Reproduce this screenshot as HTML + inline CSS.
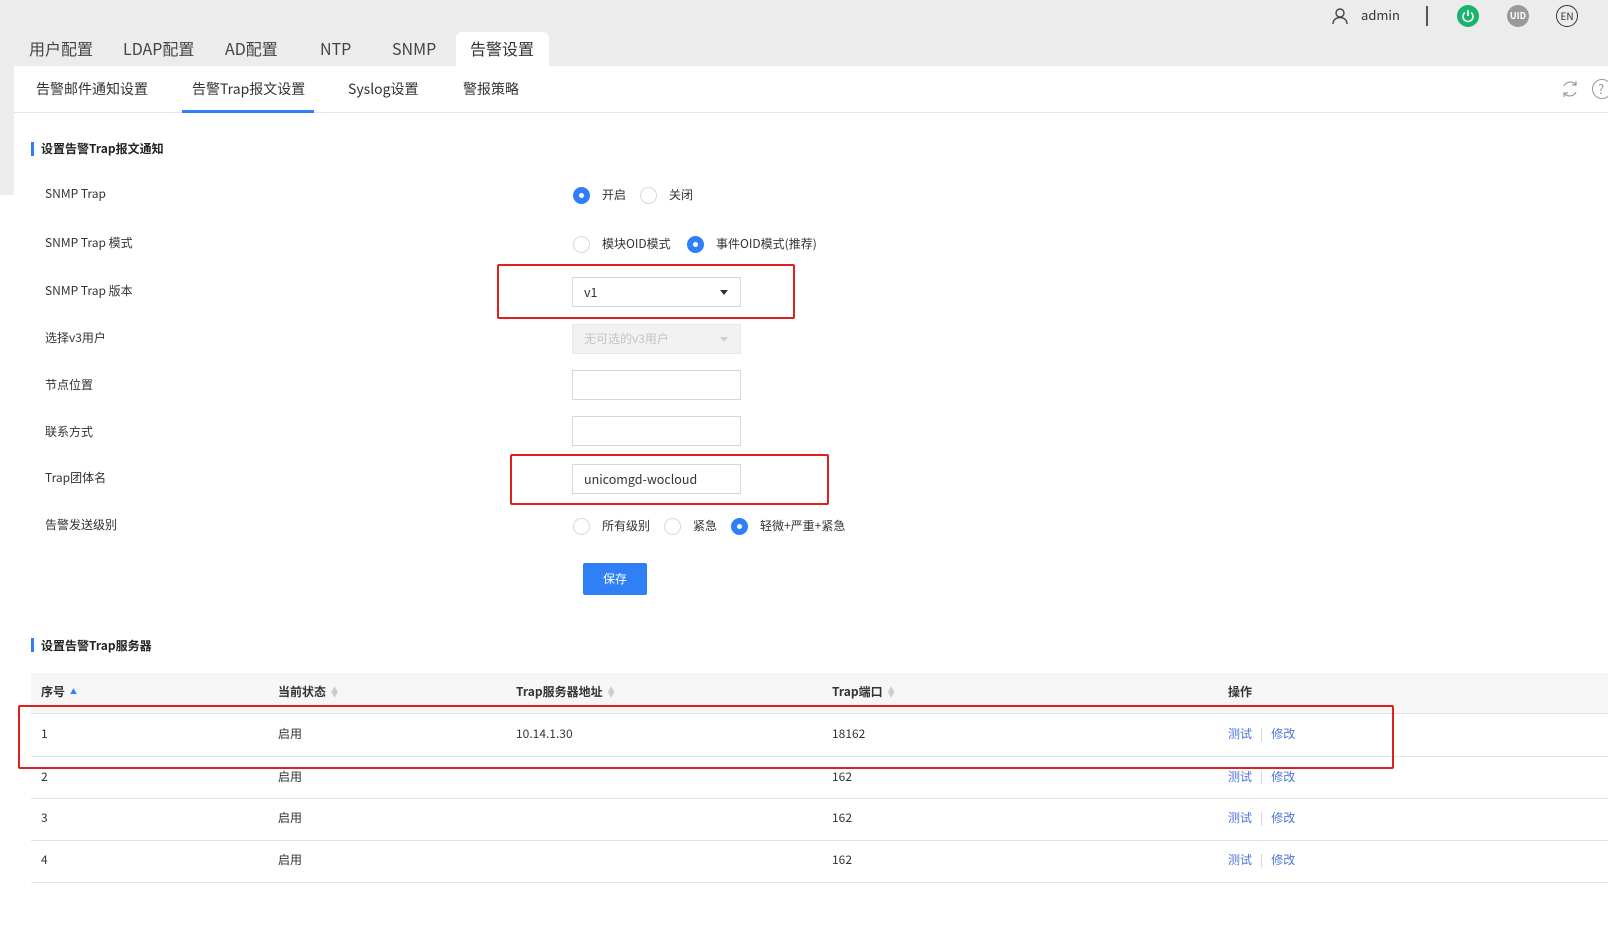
<!DOCTYPE html>
<html><head><meta charset="utf-8"><style>
*{box-sizing:border-box;margin:0;padding:0}
body{width:1608px;height:926px;background:#ececec;position:relative;overflow:hidden;font-family:"Noto Sans CJK SC","Liberation Sans",sans-serif;color:#333;font-size:12px}
.a{position:absolute;white-space:nowrap;line-height:16px}
.panel{position:absolute;left:14px;top:66px;width:1594px;height:860px;background:#fff}
.tt{font-size:16px;color:#444;top:38px;line-height:20px}
.st{font-size:14px;color:#333;top:79px;line-height:20px}
.lbl{left:45px;font-size:12px;color:#333}
.r{position:absolute;width:17px;height:17px;border-radius:50%;border:1px solid #d9d9d9;background:#fff}
.r.on{background:#2f80f7;border-color:#2f80f7}
.r.on::after{content:"";position:absolute;left:5px;top:5px;width:5px;height:5px;border-radius:50%;background:#fff}
.inp{position:absolute;left:572px;width:169px;height:30px;border:1px solid #d7d7d7;background:#fff;padding-left:11px;line-height:28px;font-size:12.5px}
.red{position:absolute;border:2px solid #e0201c;border-radius:2px}
.bar{position:absolute;left:31px;width:3px;height:14px;background:#2f80f7}
.sec{left:41px;font-weight:bold;font-size:12px;color:#222}
.th{top:684px;font-weight:bold;color:#333}
.hl{position:absolute;left:31px;right:0;height:1px;background:#e3e3e3}
.lk{color:#4a76d9}
.srt{display:inline-block;width:6px;vertical-align:middle;margin-left:5px;font-size:7px;line-height:5px;color:#ccc}
</style></head><body>
<div class="panel"></div>
<div class="a" style="left:0;top:195px;width:14px;height:731px;background:#fff"></div>
<div class="a" style="left:456px;top:32px;width:93px;height:36px;background:#fff;border-radius:6px 6px 0 0"></div>
<div class="a tt" style="left:29px">用户配置</div>
<div class="a tt" style="left:123px">LDAP配置</div>
<div class="a tt" style="left:225px">AD配置</div>
<div class="a tt" style="left:320px">NTP</div>
<div class="a tt" style="left:392px">SNMP</div>
<div class="a tt" style="left:470px;color:#333">告警设置</div>
<svg class="a" style="left:1331px;top:7px" width="18" height="18" viewBox="0 0 18 18"><circle cx="9" cy="6" r="4" fill="none" stroke="#444" stroke-width="1.4"/><path d="M2 17c0-4 3-6.5 7-6.5s7 2.5 7 6.5" fill="none" stroke="#444" stroke-width="1.4"/></svg>
<div class="a" style="left:1361px;top:7px;font-size:13px;color:#333">admin</div>
<div class="a" style="left:1426px;top:6px;width:2px;height:20px;background:#555"></div>
<div class="a" style="left:1457px;top:5px;width:22px;height:22px;border-radius:50%;background:#19b36b"></div>
<svg class="a" style="left:1461px;top:9px" width="14" height="14" viewBox="0 0 14 14"><path d="M4 3.5A5 5 0 1 0 10 3.5" fill="none" stroke="#fff" stroke-width="1.6"/><path d="M7 1v6" stroke="#fff" stroke-width="1.6"/></svg>
<div class="a" style="left:1507px;top:5px;width:22px;height:22px;border-radius:50%;background:#999;color:#fff;font-size:9px;font-weight:bold;text-align:center;line-height:22px">UID</div>
<div class="a" style="left:1556px;top:5px;width:22px;height:22px;border-radius:50%;border:1.5px solid #333;color:#333;font-size:10px;text-align:center;line-height:19px">EN</div>
<div class="a st" style="left:36px">告警邮件通知设置</div>
<div class="a st" style="left:192px">告警Trap报文设置</div>
<div class="a st" style="left:348px">Syslog设置</div>
<div class="a st" style="left:463px">警报策略</div>
<div class="a" style="left:14px;top:112px;width:1594px;height:1px;background:#e6e6e6"></div>
<div class="a" style="left:182px;top:110px;width:132px;height:3px;background:#2f80f7"></div>
<svg class="a" style="left:1560px;top:79px" width="20" height="20" viewBox="0 0 20 20"><path d="M4 7A7 7 0 0 1 16 6M16 13A7 7 0 0 1 4 14" fill="none" stroke="#999" stroke-width="1.2"/><path d="M16 2v4h-4M4 18v-4h4" fill="none" stroke="#999" stroke-width="1.2"/></svg>
<div class="a" style="left:1592px;top:79px;width:20px;height:20px;border-radius:50%;border:1.2px solid #999;color:#999;font-size:13px;line-height:18px;padding-left:5px">?</div>
<div class="bar" style="top:142px"></div>
<div class="a sec" style="top:141px">设置告警Trap报文通知</div>
<div class="a lbl" style="top:186px">SNMP Trap</div>
<div class="a lbl" style="top:235px">SNMP Trap 模式</div>
<div class="a lbl" style="top:283px">SNMP Trap 版本</div>
<div class="a lbl" style="top:330px">选择v3用户</div>
<div class="a lbl" style="top:377px">节点位置</div>
<div class="a lbl" style="top:424px">联系方式</div>
<div class="a lbl" style="top:470px">Trap团体名</div>
<div class="a lbl" style="top:517px">告警发送级别</div>
<div class="r on" style="left:573px;top:187px"></div><div class="a" style="left:602px;top:187px">开启</div>
<div class="r" style="left:640px;top:187px"></div><div class="a" style="left:669px;top:187px">关闭</div>
<div class="r" style="left:573px;top:236px"></div><div class="a" style="left:602px;top:236px">模块OID模式</div>
<div class="r on" style="left:687px;top:236px"></div><div class="a" style="left:716px;top:236px">事件OID模式(推荐)</div>
<div class="inp" style="top:277px;height:30px">v1</div>
<div class="a" style="left:720px;top:290px;width:0;height:0;border-left:4px solid transparent;border-right:4px solid transparent;border-top:5px solid #333"></div>
<div class="red" style="left:497px;top:264px;width:298px;height:55px"></div>
<div class="inp" style="top:324px;background:#f2f2f2;border-color:#e8e8e8;color:#c4c4c4;font-size:12px">无可选的v3用户</div>
<div class="a" style="left:720px;top:337px;border-left:4px solid transparent;border-right:4px solid transparent;border-top:5px solid #d0d0d0"></div>
<div class="inp" style="top:370px"></div>
<div class="inp" style="top:416px"></div>
<div class="inp" style="top:464px;color:#333">unicomgd-wocloud</div>
<div class="red" style="left:510px;top:454px;width:319px;height:51px"></div>
<div class="r" style="left:573px;top:518px"></div><div class="a" style="left:602px;top:518px">所有级别</div>
<div class="r" style="left:664px;top:518px"></div><div class="a" style="left:693px;top:518px">紧急</div>
<div class="r on" style="left:731px;top:518px"></div><div class="a" style="left:760px;top:518px">轻微+严重+紧急</div>
<div class="a" style="left:583px;top:563px;width:64px;height:32px;background:#2f80f7;border-radius:2px;color:#fff;text-align:center;line-height:32px;font-size:12px">保存</div>
<div class="bar" style="top:638px"></div>
<div class="a sec" style="top:638px">设置告警Trap服务器</div>
<div class="a" style="left:31px;top:673px;right:0;height:40px;background:#f6f6f7"></div>
<div class="a th" style="left:41px">序号<span class="srt" style="color:#2f80f7">▲</span></div>
<div class="a th" style="left:278px">当前状态<span class="srt">▲<br>▼</span></div>
<div class="a th" style="left:516px">Trap服务器地址<span class="srt">▲<br>▼</span></div>
<div class="a th" style="left:832px">Trap端口<span class="srt">▲<br>▼</span></div>
<div class="a th" style="left:1228px">操作</div>
<div class="hl" style="top:713px"></div>
<div class="hl" style="top:756px"></div>
<div class="hl" style="top:798px"></div>
<div class="hl" style="top:840px"></div>
<div class="hl" style="top:882px"></div>
<div class="a" style="left:41px;top:726px">1</div><div class="a" style="left:278px;top:726px">启用</div><div class="a" style="left:516px;top:726px">10.14.1.30</div><div class="a" style="left:832px;top:726px">18162</div>
<div class="a" style="left:1228px;top:726px"><span class="lk">测试</span><span style="color:#ccc;margin:0 8px">|</span><span class="lk">修改</span></div>
<div class="a" style="left:41px;top:769px">2</div><div class="a" style="left:278px;top:769px">启用</div><div class="a" style="left:832px;top:769px">162</div>
<div class="a" style="left:1228px;top:769px"><span class="lk">测试</span><span style="color:#ccc;margin:0 8px">|</span><span class="lk">修改</span></div>
<div class="a" style="left:41px;top:810px">3</div><div class="a" style="left:278px;top:810px">启用</div><div class="a" style="left:832px;top:810px">162</div>
<div class="a" style="left:1228px;top:810px"><span class="lk">测试</span><span style="color:#ccc;margin:0 8px">|</span><span class="lk">修改</span></div>
<div class="a" style="left:41px;top:852px">4</div><div class="a" style="left:278px;top:852px">启用</div><div class="a" style="left:832px;top:852px">162</div>
<div class="a" style="left:1228px;top:852px"><span class="lk">测试</span><span style="color:#ccc;margin:0 8px">|</span><span class="lk">修改</span></div>
<div class="red" style="left:18px;top:705px;width:1376px;height:64px"></div>
</body></html>
